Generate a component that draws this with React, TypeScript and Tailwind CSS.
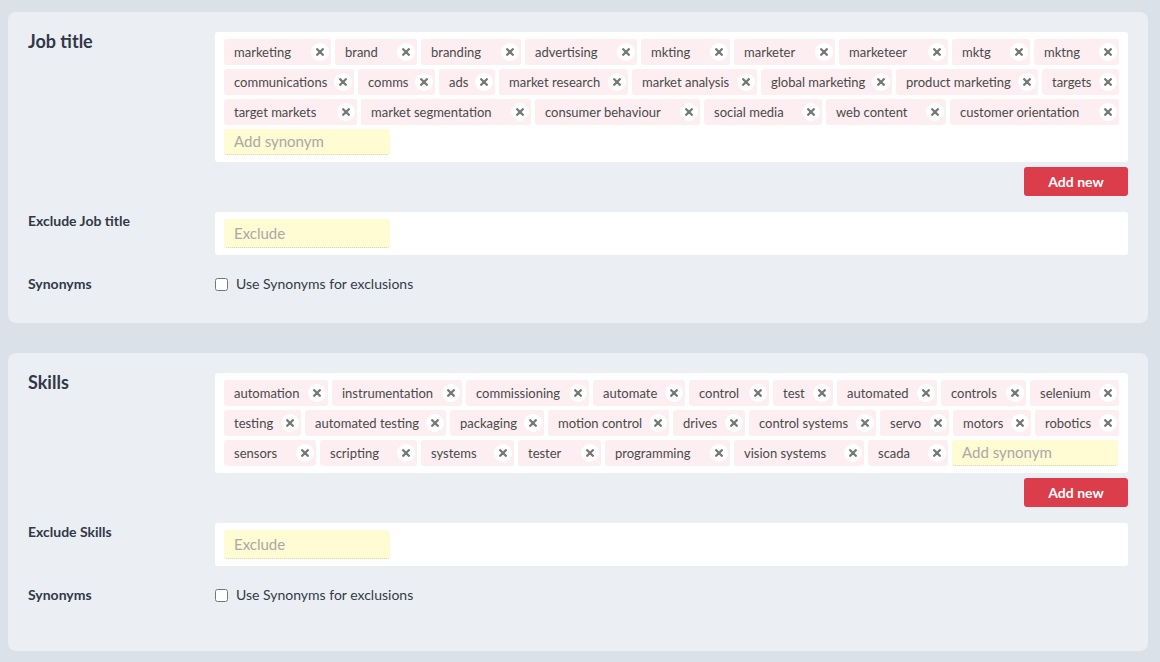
import React from "react";

type Tag = [string, number];

const jobTags: Tag[] = [
  ["marketing", 107], ["brand", 82], ["branding", 100], ["advertising", 112], ["mkting", 89],
  ["marketer", 101], ["marketeer", 109], ["mktg", 78], ["mktng", 85],
  ["communications", 130], ["comms", 77], ["ads", 56], ["market research", 129],
  ["market analysis", 125], ["global marketing", 131], ["product marketing", 142], ["targets", 77],
  ["target markets", 133], ["market segmentation", 170], ["consumer behaviour", 165],
  ["social media", 118], ["web content", 120], ["customer orientation", 169],
];

const skillTags: Tag[] = [
  ["automation", 104], ["instrumentation", 130], ["commissioning", 123], ["automate", 92],
  ["control", 80], ["test", 60], ["automated", 100], ["controls", 85], ["selenium", 89],
  ["testing", 77], ["automated testing", 141], ["packaging", 94], ["motion control", 121],
  ["drives", 72], ["control systems", 127], ["servo", 69], ["motors", 78], ["robotics", 84],
  ["sensors", 92], ["scripting", 97], ["systems", 93], ["tester", 83], ["programming", 125],
  ["vision systems", 130], ["scada", 80],
];

function RemoveIcon() {
  return (
    <span className="flex h-[18px] w-[18px] shrink-0 items-center justify-center rounded-full bg-white">
      <svg width="8" height="8" viewBox="0 0 8 8">
        <path d="M1.2 1.2L6.8 6.8M6.8 1.2L1.2 6.8" stroke="#777777" strokeWidth="2.3" strokeLinecap="round" />
      </svg>
    </span>
  );
}

function TagChip({ label, width }: { label: string; width: number }) {
  return (
    <div
      className="flex h-[26px] items-center justify-between rounded-[3px] bg-[#fdeef1] pl-[10px] pr-[2px] text-[13px] text-[#4a4a4a]"
      style={{ width }}
    >
      <span className="whitespace-nowrap pt-[2px]">{label}</span>
      <RemoveIcon />
    </div>
  );
}

function YellowInput({ placeholder, tall }: { placeholder: string; tall?: boolean }) {
  return (
    <div
      className={
        "flex w-[166px] items-center rounded-[3px] border-b border-dotted border-[#d6d2a8] bg-[#fffbd3] pl-[10px] text-[15px] text-[#a9a9a9] " +
        (tall ? "h-[29px]" : "h-[26px]")
      }
    >
      {placeholder}
    </div>
  );
}

function Section({ title, tags, last }: { title: string; tags: Tag[]; last?: boolean }) {
  return (
    <div className={"rounded-[8px] bg-[#ebeff3] px-5 pt-5 " + (last ? "pb-[46px]" : "pb-[29px]")}>
      <div className="grid grid-cols-[187px_1fr]">
        <div className="-mt-[2px] text-[18px] font-bold leading-[22px] text-[#323848]">{title}</div>
        <div>
          <div className="flex flex-wrap gap-[4px] rounded-[3px] bg-white px-[9px] py-[7px]">
            {tags.map(([label, w]) => (
              <TagChip key={label} label={label} width={w} />
            ))}
            <YellowInput placeholder="Add synonym" />
          </div>
          <div className="mt-[5px] flex justify-end">
            <button className="h-[29px] w-[104px] rounded-[3px] bg-[#dc3d4b] text-[14px] font-bold text-white">
              Add new
            </button>
          </div>
        </div>

        <div className="mt-4 text-[14px] font-bold leading-[18px] text-[#323848]">
          Exclude {title}
        </div>
        <div className="mt-4 rounded-[3px] bg-white px-[9px] pb-[7px] pt-[7px]">
          <YellowInput placeholder="Exclude" tall />
        </div>

        <div className="mt-[19px] text-[14px] font-bold leading-[20px] text-[#323848]">Synonyms</div>
        <label className="mt-[19px] flex items-center gap-[8px] text-[14px] leading-[20px] text-[#333a48]">
          <input type="checkbox" className="m-0 h-[13px] w-[13px]" />
          Use Synonyms for exclusions
        </label>
      </div>
    </div>
  );
}

export default function App() {
  return (
    <div
      className="min-h-[662px] bg-[#dae1e8] pb-[11px] pl-2 pr-3 pt-3"
      style={{ fontFamily: "Lato, 'Open Sans', sans-serif" }}
    >
      <div className="flex flex-col gap-[30px]">
        <Section title="Job title" tags={jobTags} />
        <Section title="Skills" tags={skillTags} last />
      </div>
    </div>
  );
}
